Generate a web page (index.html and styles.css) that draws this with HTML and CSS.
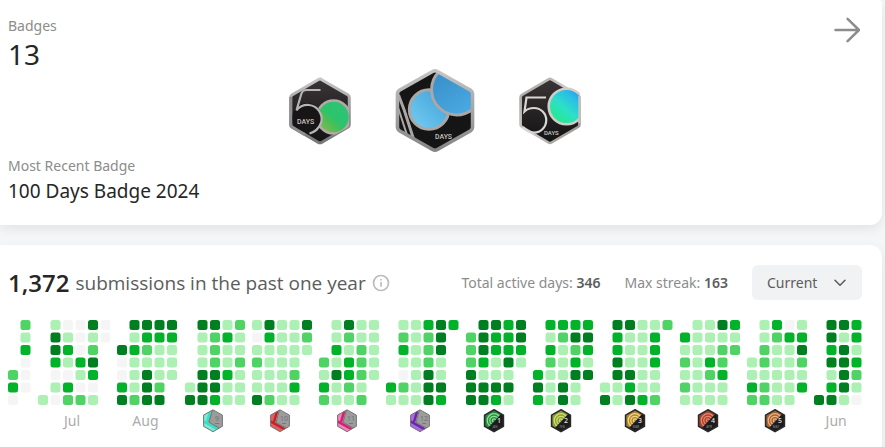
FILE: index.html
```html
<!DOCTYPE html>
<html lang="en">
<head>
<meta charset="utf-8">
<meta name="viewport" content="width=device-width, initial-scale=1">
<title>Profile</title>
<link rel="stylesheet" href="styles.css">
</head>
<body>
<main class="page">
  <section class="card badges">
    <header class="badges-head">
      <div>
        <div class="caption">Badges</div>
        <div class="count">13</div>
      </div>
      <a class="more" href="#badges" aria-label="All badges">
        <svg width="26" height="26" viewBox="0 0 26 26" fill="none" stroke="#8c8c8c" stroke-width="2.500" stroke-linecap="round" stroke-linejoin="round"><path d="M1.500 13H25M13.600 1.800 25 13 13.600 24.200"/></svg>
      </a>
    </header>
    <div class="badge-row">
      <svg class="medal" viewBox="0 0 62 68" role="img" aria-label="50 Days Badge">
        <defs>
          <linearGradient id="rimA" x1="0" y1="0" x2="0" y2="1"><stop offset="0" stop-color="#c8c8c8"/><stop offset=".5" stop-color="#9a9a9a"/><stop offset="1" stop-color="#777"/></linearGradient>
          <linearGradient id="face" x1="0" y1="0" x2="0" y2="1"><stop offset="0" stop-color="#3a3435"/><stop offset="1" stop-color="#131313"/></linearGradient>
          <linearGradient id="green" x1="1" y1="0" x2="0" y2="1"><stop offset="0" stop-color="#2fc27a"/><stop offset=".5" stop-color="#2bc46c"/><stop offset=".62" stop-color="#48be57"/><stop offset="1" stop-color="#9fb653"/></linearGradient>
          <clipPath id="hexA"><path d="M31 2 60 18V50L31 66 2 50V18Z"/></clipPath>
        </defs>
        <path d="M31 2.200 59 18.400V49.600L31 65.800 3 49.600V18.400Z" fill="url(#face)"/>
        <path d="M31 1.800 59 17.900Q60.300 19 60.300 20.500V47.500Q60.300 49 59 50L33 65.200Q31 66.500 29 65.200L3 50Q1.700 49 1.700 47.500V20.500Q1.700 19 3 17.900L29 2.700Q31 1.500 33 2.700Z" fill="none" stroke="url(#rimA)" stroke-width="3"/>
        <g clip-path="url(#hexA)">
          <circle cx="44.500" cy="40" r="16.500" fill="url(#green)" stroke="#b3aaa5" stroke-width="2.600"/>
          <circle cx="18" cy="41" r="15" fill="#171516"/>
        </g>
        <path d="M1.700 20V47.500Q1.700 49 3 50L16 57.600" fill="none" stroke="#909090" stroke-width="3"/>
        <path d="M31.500 13H17.500Q13.500 13 12.300 17L7.500 33.200Q12 27.500 20 28A14 14 0 0 1 32 46Q29 54 20.500 56.500" fill="none" stroke="#b5b5b5" stroke-width="2.200"/>
        <text x="8" y="47" class="medal-text">DAYS</text>
      </svg>
      <svg class="medal medal-large" viewBox="0 0 80 86" role="img" aria-label="100 Days Badge">
        <defs>
          <linearGradient id="rimB" x1="0" y1="0" x2="0" y2="1"><stop offset="0" stop-color="#c5c5c5"/><stop offset="1" stop-color="#858585"/></linearGradient>
          <linearGradient id="blueA" x1="0" y1="0" x2=".6" y2="1"><stop offset="0" stop-color="#3589c4"/><stop offset="1" stop-color="#4aa9e2"/></linearGradient>
          <linearGradient id="blueB" x1="1" y1="0" x2="0" y2="1"><stop offset="0" stop-color="#3ba0da"/><stop offset="1" stop-color="#78cef0"/></linearGradient>
          <clipPath id="hexB"><path d="M40 2 78 23V63L40 84 2 63V23Z"/></clipPath>
        </defs>
        <path d="M40 2.500 77.500 24V62L40 83.500 2.500 62V24Z" fill="#151515"/>
        <g clip-path="url(#hexB)" stroke="#aaa7a6" stroke-width="3">
          <path d="M3 27 9 43 19 74" fill="none"/>
          <path d="M3 41 13 72" fill="none" stroke-width="2"/>
          <circle cx="34" cy="42" r="20" fill="url(#blueB)"/>
          <circle cx="62" cy="22" r="25.500" fill="url(#blueA)"/>
        </g>
        <path d="M42.500 3.500 76 22.500Q78 24 78 26V60Q78 62 76 63.500L42.500 82.500Q40 84 37.500 82.500L4 63.500Q2 62 2 60V26Q2 24 4 22.500L37.500 3.500Q40 2 42.500 3.500Z" fill="none" stroke="url(#rimB)" stroke-width="3.600"/>
        <text x="40" y="72" class="medal-text">DAYS</text>
      </svg>
      <svg class="medal" viewBox="0 0 62 68" role="img" aria-label="50 Days Badge">
        <defs>
          <linearGradient id="rimC" x1="0" y1="0" x2="1" y2="1"><stop offset="0" stop-color="#a5a3a1"/><stop offset=".5" stop-color="#d0cdca"/><stop offset="1" stop-color="#8e8984"/></linearGradient>
          <linearGradient id="aqua" x1="1" y1="0" x2=".2" y2="1"><stop offset="0" stop-color="#2b7cff"/><stop offset=".3" stop-color="#29bde6"/><stop offset=".6" stop-color="#2ce0c8"/><stop offset="1" stop-color="#22ec7e"/></linearGradient>
          <clipPath id="hexC"><path d="M31 2 61 10V50L31 66 2 50V18Z"/></clipPath>
        </defs>
        <path d="M31 2.200 59.500 18.400V49.600L31 65.800 2.500 49.600V18.400Z" fill="url(#face)"/>
        <path d="M32.500 2.300 59 17.900Q60.500 19 60.500 20.500V47.500Q60.500 49 59 50L32.500 65.500Q31 66.500 29.500 65.500L3 50Q1.500 49 1.500 47.500V20.500Q1.500 19 3 17.900L29.500 2.300Q31 1.500 32.500 2.300Z" fill="none" stroke="url(#rimC)" stroke-width="2.600"/>
        <g clip-path="url(#hexC)"><circle cx="47.500" cy="29.500" r="17.800" fill="url(#aqua)" stroke="#d0ccc8" stroke-width="2.600"/></g>
        <path d="M60.500 19V46" stroke="#c4bfba" stroke-width="2.400"/>
        <path d="M27 20.500H7.500L5.500 34.500Q9 31 15 31A12 12 0 0 1 15 55.500Q8 55.500 4 50" fill="none" stroke="#d9d7d5" stroke-width="2.200"/>
        <text x="25" y="58" class="medal-text medal-text-small">DAYS</text>
      </svg>
    </div>
    <div class="caption">Most Recent Badge</div>
    <div class="recent">100 Days Badge 2024</div>
  </section>

  <section class="card activity">
    <header class="activity-head">
      <div class="total">
        <strong>1,372</strong>
        <span>submissions in the past one year</span>
        <svg class="info" width="18" height="18" viewBox="0 0 18 18" fill="none" stroke="#bdbdbd" stroke-width="1.700"><circle cx="9" cy="9" r="7.500"/><path d="M9 8V12.700M9 5V6.600"/></svg>
      </div>
      <div class="stats">
        <div class="stat">Total active days: <b>346</b></div>
        <div class="stat">Max streak: <b>163</b></div>
        <div class="period">
          <select aria-label="Period"><option>Current</option></select>
          <svg width="12" height="8" viewBox="0 0 12 8" fill="none" stroke="#5c5c5c" stroke-width="1.500" stroke-linecap="round" stroke-linejoin="round"><path d="M1 1.200 6 6.300 11 1.200"/></svg>
        </div>
      </div>
    </header>
    <div class="heatmap" id="heatmap"></div>
  </section>
</main>
<script src="heatmap.js"></script>
</body>
</html>
```
FILE: heatmap.js
```javascript
// Each month is a list of week columns; each character is one day's activity
// level (0-4), "." is a day outside the month.
const months = [
  { weeks: "....230 213000." },
  { label: "Jul", weeks: "......1 1443010 0131032 0003102 4124301 00....." },
  { label: "Aug", weeks: "..40034 4131112 4321444 4311124 43111.." },
  { medal: ["9", "SEP", "#32e0c4", "#7fe9d6"], old: true, weeks: ".....14 4111444 4222443 1311311 2112111" },
  { medal: ["10", "OCT", "#cc1f24", "#e0605f"], old: true, weeks: "1012114 4311112 1111111 1111231 421...." },
  { medal: ["11", "NOV", "#d81b74", "#ee84b8"], old: true, weeks: "...2132 1131411 4213321 1122212 11111.." },
  { medal: ["12", "DEC", "#6a25ad", "#a66ddc"], old: true, weeks: ".....31 1231021 1111111 3222444 4441143 3......" },
  { medal: ["1", "JAN", "#8be08f", "#2c8a45"], weeks: ".222444 4443144 4331143 3334141 4431..." },
  { medal: ["2", "FEB", "#d3e06a", "#8b9c3e"], weeks: "....343 3132111 3211144 3423411 34314.." },
  { medal: ["3", "MAR", "#f5d675", "#ab8638"], weeks: ".....14 4334411 4111434 1111113 1333112 2......" },
  { medal: ["4", "APR", "#ee8268", "#a04632"], weeks: ".312121 1111111 1113211 4122311 312...." },
  { medal: ["5", "MAY", "#f2b077", "#a0643a"], weeks: "...1132 1122122 3211111 0311111 134213." },
  { label: "Jun", weeks: "......4 4434134 4144441 3313210" }
];

const hexagon = "M11 .800 20.400 6.100V17.300L11 22.700 1.600 17.300V6.100Z";

function grid(weeks) {
  const columns = weeks.split(" ");
  let cells = "";
  columns.forEach((week, x) => {
    [...week].forEach((level, y) => {
      if (level !== ".") {
        cells += `<rect class="level-${level}" x="${x * 5}" y="${y * 5}" width="4" height="4" rx="1"/>`;
      }
    });
  });
  return `<svg class="grid" viewBox="0 0 ${columns.length * 5 - 1} 34">${cells}</svg>`;
}

function medal([number, name, color, tint], old, id) {
  const open = `<svg class="mini" viewBox="0 0 22 24" role="img" aria-label="${name} badge"><clipPath id="m${id}"><path d="${hexagon}"/></clipPath>`;
  if (old) {
    return `${open}<g clip-path="url(#m${id})"><path d="M0 0H22V24H0Z" fill="#9c9c9c"/>
      <path d="M0 0H9L5.500 13 18 21 11 24H0Z" fill="${tint}"/>
      <path d="M8.500 1 5 13" stroke="${color}" stroke-width="2.400"/>
      <path d="M0 11.500 17 21" stroke="${color}" stroke-width="2.500"/>
      <path d="M10.500 1 7 13.300 19 20" fill="none" stroke="#6d6d6d" stroke-width=".8"/></g>
      <path d="${hexagon}" fill="none" stroke="#777" stroke-width="1"/>
      <text x="15" y="12" class="mini-old">${number}</text><path d="M13 14.500H17" stroke="#777" stroke-width="1"/></svg>`;
  }
  return `${open}<g clip-path="url(#m${id})"><path d="M0 0H22V24H0Z" fill="${tint}"/>
    <g fill="none" stroke="${color}" stroke-width="1.300"><circle cx="11" cy="11.500" r="1.600"/><circle cx="11" cy="11.500" r="4.200"/><circle cx="11" cy="11.500" r="6.800"/></g>
    <path d="M20 3 4 20 6 24H22Z" fill="#1c1c1e"/></g>
    <path d="${hexagon}" fill="none" stroke="#292b2b" stroke-width="1.600"/>
    <text x="16" y="14" class="mini-number">${number}</text><text x="12" y="19" class="mini-name">${name}</text></svg>`;
}

document.getElementById("heatmap").innerHTML = months.map((month, i) => {
  const foot = month.medal ? medal(month.medal, month.old, i) : month.label || "";
  return `<div class="month">${grid(month.weeks)}<div class="month-label">${foot}</div></div>`;
}).join("");
```
FILE: styles.css
```css
* {
  box-sizing: border-box;
}

body {
  margin: 0;
  background: #f5f6f8;
  color: #262626;
  font-family: "Segoe UI", "Noto Sans", "Open Sans", sans-serif;
  font-size: 14px;
  line-height: 22px;
}

.page {
  display: flex;
  flex-direction: column;
  gap: 20px;
  padding-right: 3px;
  overflow: hidden;
}

.card {
  background: #fff;
  padding: 20px 20px 20px 8px;
  border-radius: 0 12px 12px 0;
  box-shadow: 0 4px 12px rgba(0, 0, 0, 0.08);
}

.badges {
  padding-top: 15px;
  border-top-right-radius: 4px;
}

.badges-head {
  display: flex;
  justify-content: space-between;
}

.caption {
  color: #8c8c8c;
}

.count {
  margin-top: 3px;
  font-size: 28px;
  line-height: 28px;
}

.more {
  display: block;
  height: 26px;
  margin: 2px 2px 0 0;
}

.more svg {
  display: block;
}

.badge-row {
  display: flex;
  align-items: center;
  justify-content: center;
  gap: 44px;
  margin-bottom: 2px;
}

.medal {
  width: 62px;
  height: 68px;
}

.medal-large {
  width: 80px;
  height: 85px;
}

.medal-text {
  fill: #c9c5c3;
  font-family: "Roboto", sans-serif;
  font-size: 7px;
  font-weight: 500;
}

.medal-text-small {
  font-size: 6px;
}

.recent {
  font-size: 19px;
  line-height: 28px;
}

.activity {
  min-height: 210px;
}

.activity-head,
.total,
.stats {
  display: flex;
  align-items: center;
}

.activity-head {
  justify-content: space-between;
}

.total {
  gap: 6px;
  color: #5c5c5c;
  font-family: "Segoe UI", "Open Sans", sans-serif;
  font-size: 19px;
}

.total strong {
  color: #262626;
  font-size: 24px;
  font-weight: 600;
}

.stats {
  gap: 24px;
  color: #8c8c8c;
}

.stat b {
  color: #5c5c5c;
  font-weight: 600;
}

.period {
  position: relative;
  width: 110px;
}

.period select {
  display: block;
  width: 100%;
  height: 35px;
  padding: 0 32px 0 15px;
  border: 0;
  border-radius: 6px;
  appearance: none;
  background: #f1f2f4;
  color: #5c5c5c;
  font: inherit;
}

.period svg {
  position: absolute;
  top: 14px;
  right: 16px;
  pointer-events: none;
}

.heatmap {
  display: flex;
  justify-content: space-between;
  margin-top: 20px;
}

.grid {
  display: block;
  height: 85px;
}

.level-0 { fill: #f5f5f5; }
.level-1 { fill: #acf0b4; }
.level-2 { fill: #4ed364; }
.level-3 { fill: #01b328; }
.level-4 { fill: #007f21; }

.month-label {
  display: flex;
  align-items: center;
  justify-content: center;
  height: 24px;
  margin-top: 4px;
  padding-right: 4px;
  color: #acacac;
}

.mini {
  width: 22px;
  height: 24px;
}

.mini-old,
.mini-number,
.mini-name {
  font-family: "Open Sans", sans-serif;
  text-anchor: middle;
}

.mini-old {
  fill: #707070;
  font-size: 7px;
}

.mini-number {
  fill: #dcdcdc;
  font-size: 7px;
  font-weight: 600;
}

.mini-name {
  fill: #9a9a9a;
  font-size: 3px;
}
```
